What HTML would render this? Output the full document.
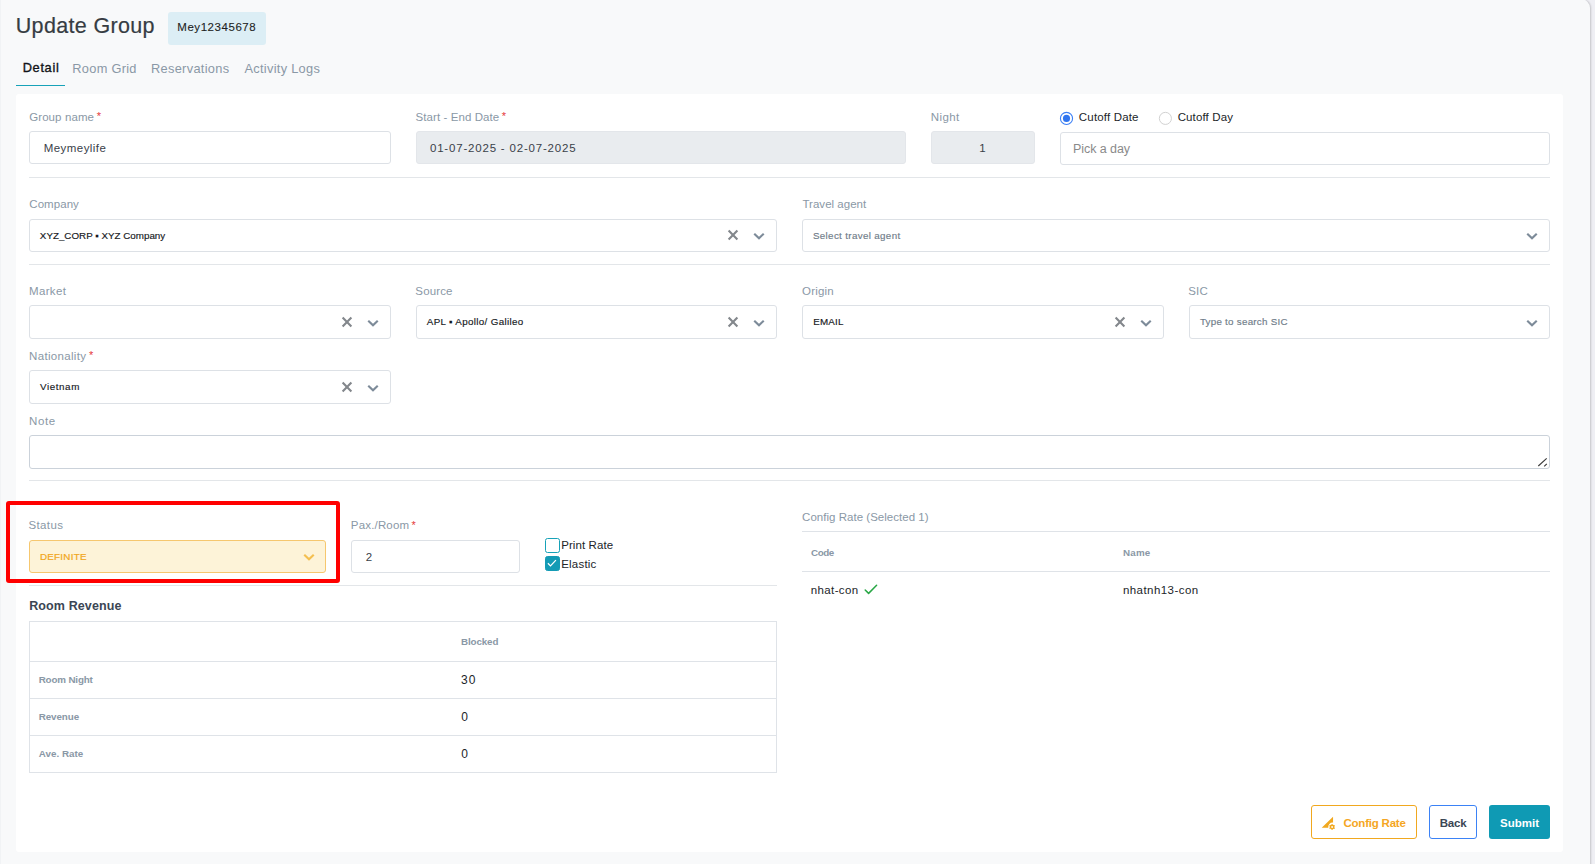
<!DOCTYPE html>
<html lang="en">
<head>
<meta charset="utf-8">
<title>Update Group</title>
<style>
*{box-sizing:border-box;margin:0;padding:0}
html,body{width:1595px;height:864px;overflow:hidden}
body{background:#efeff4;font-family:"Liberation Sans",sans-serif;font-size:12px;color:#343a40;position:relative}
.abs{position:absolute}
svg{display:block}
#panel{position:absolute;left:0;top:-1.5px;width:1590px;height:880px;background:#f8f9fa;border-top-right-radius:9px;box-shadow:1px 0 2px rgba(0,0,0,.18)}
.t{position:absolute;white-space:nowrap}
.box{border:1px solid #dde1e6;border-radius:3px;background:#fff}
.box.dis{background:#e9ecef;border-color:#e3e6ea}
.hr{height:1px;background:#e3e6e9}
.tl{height:1px;background:#dfe3e8}
.cb{width:15px;height:15px;border:1px solid #17a2b8;border-radius:2.5px;background:#fff}
.cb.on{background:#149bb5;border-color:#149bb5}
.btn{height:34px;border-radius:3px;background:#fff}
</style>
</head>
<body>
<div id="panel"></div>
<div class="abs" style="left:0;top:0;width:1px;height:864px;background:#f1f3f5"></div>
<div class="abs" style="left:168px;top:12px;width:98px;height:32.5px;background:#dceef5;border-radius:3px"></div>
<div class="abs" style="left:16px;top:84.8px;width:49px;height:1.4px;background:#17a2b8"></div>
<div class="abs" style="left:16px;top:93.6px;width:1547px;height:758.6px;background:#fff;border-radius:3px"></div>
<div class="abs box" style="left:29px;top:131px;width:362px;height:33px"></div>
<div class="abs box dis" style="left:416px;top:131px;width:490px;height:33px"></div>
<div class="abs box dis" style="left:931px;top:131px;width:104px;height:33px"></div>
<svg class="abs" style="left:1058px;top:110px" width="17" height="17" viewBox="0 0 17 17"><circle cx="8.5" cy="8.4" r="6.05" fill="#fff" stroke="#3b7ff5" stroke-width="1.1"/><circle cx="8.5" cy="8.4" r="3.55" fill="#2f74ef"/></svg>
<svg class="abs" style="left:1157px;top:110px" width="17" height="17" viewBox="0 0 17 17"><circle cx="8.4" cy="8.4" r="6.05" fill="#fff" stroke="#d2d2d2" stroke-width="1"/></svg>
<div class="abs box" style="left:1060px;top:132px;width:490px;height:33px"></div>
<div class="abs hr" style="left:29px;top:177px;width:1521px"></div>
<div class="abs hr" style="left:29px;top:264px;width:1521px"></div>
<div class="abs hr" style="left:29px;top:480px;width:1521px"></div>
<div class="abs box" style="left:29px;top:219px;width:748px;height:33px"></div><svg class="abs" style="left:725.70px;top:228.05px" width="14" height="14" viewBox="-7 -7 14 14"><path d="M-4.4 -4.45 L4.4 4.45 M4.4 -4.45 L-4.4 4.45" stroke="#83878c" stroke-width="2.1" fill="none"/></svg><svg class="abs" style="left:751.90px;top:228.75px" width="14" height="14" viewBox="-7 -7 14 14"><path d="M-4.75 -2.36 L0 2.36 L4.75 -2.36" stroke="#7d8b99" stroke-width="2.1" fill="none"/></svg>
<div class="abs box" style="left:802px;top:219px;width:748px;height:33px"></div><svg class="abs" style="left:1524.90px;top:228.75px" width="14" height="14" viewBox="-7 -7 14 14"><path d="M-4.75 -2.36 L0 2.36 L4.75 -2.36" stroke="#7d8b99" stroke-width="2.1" fill="none"/></svg>
<div class="abs box" style="left:29px;top:305px;width:362px;height:34px"></div><svg class="abs" style="left:339.70px;top:315.05px" width="14" height="14" viewBox="-7 -7 14 14"><path d="M-4.4 -4.45 L4.4 4.45 M4.4 -4.45 L-4.4 4.45" stroke="#83878c" stroke-width="2.1" fill="none"/></svg><svg class="abs" style="left:365.90px;top:315.75px" width="14" height="14" viewBox="-7 -7 14 14"><path d="M-4.75 -2.36 L0 2.36 L4.75 -2.36" stroke="#7d8b99" stroke-width="2.1" fill="none"/></svg>
<div class="abs box" style="left:416px;top:305px;width:361px;height:34px"></div><svg class="abs" style="left:725.70px;top:315.05px" width="14" height="14" viewBox="-7 -7 14 14"><path d="M-4.4 -4.45 L4.4 4.45 M4.4 -4.45 L-4.4 4.45" stroke="#83878c" stroke-width="2.1" fill="none"/></svg><svg class="abs" style="left:751.90px;top:315.75px" width="14" height="14" viewBox="-7 -7 14 14"><path d="M-4.75 -2.36 L0 2.36 L4.75 -2.36" stroke="#7d8b99" stroke-width="2.1" fill="none"/></svg>
<div class="abs box" style="left:802px;top:305px;width:362px;height:34px"></div><svg class="abs" style="left:1112.70px;top:315.05px" width="14" height="14" viewBox="-7 -7 14 14"><path d="M-4.4 -4.45 L4.4 4.45 M4.4 -4.45 L-4.4 4.45" stroke="#83878c" stroke-width="2.1" fill="none"/></svg><svg class="abs" style="left:1138.90px;top:315.75px" width="14" height="14" viewBox="-7 -7 14 14"><path d="M-4.75 -2.36 L0 2.36 L4.75 -2.36" stroke="#7d8b99" stroke-width="2.1" fill="none"/></svg>
<div class="abs box" style="left:1189px;top:305px;width:361px;height:34px"></div><svg class="abs" style="left:1524.90px;top:315.75px" width="14" height="14" viewBox="-7 -7 14 14"><path d="M-4.75 -2.36 L0 2.36 L4.75 -2.36" stroke="#7d8b99" stroke-width="2.1" fill="none"/></svg>
<div class="abs box" style="left:29px;top:370px;width:362px;height:34px"></div><svg class="abs" style="left:339.70px;top:380.05px" width="14" height="14" viewBox="-7 -7 14 14"><path d="M-4.4 -4.45 L4.4 4.45 M4.4 -4.45 L-4.4 4.45" stroke="#83878c" stroke-width="2.1" fill="none"/></svg><svg class="abs" style="left:365.90px;top:380.75px" width="14" height="14" viewBox="-7 -7 14 14"><path d="M-4.75 -2.36 L0 2.36 L4.75 -2.36" stroke="#7d8b99" stroke-width="2.1" fill="none"/></svg>
<div class="abs box" style="left:29px;top:435px;width:1521px;height:34px;border-color:#cbd2da"></div>
<svg class="abs" style="left:1536px;top:456px" width="12" height="12" viewBox="0 0 12 12"><path d="M2.3 10 L10.7 2.4 M8.2 10.4 L10.8 7.8" stroke="#3c3c3c" stroke-width="1.2" fill="none"/></svg>
<div class="abs" style="left:6.3px;top:501.3px;width:333.4px;height:81.3px;border:4.2px solid #ff0000;border-radius:3px"></div>
<div class="abs box" style="left:29px;top:540px;width:297px;height:33px;background:#fdf3d8;border-color:#f6c76f"></div>
<svg class="abs" style="left:301.50px;top:549.60px" width="14" height="14" viewBox="-7 -7 14 14"><path d="M-4.75 -2.36 L0 2.36 L4.75 -2.36" stroke="#f4bf50" stroke-width="2.1" fill="none"/></svg>
<div class="abs box" style="left:351px;top:540px;width:169px;height:33px"></div>
<div class="abs cb" style="left:545px;top:538px"></div>
<div class="abs cb on" style="left:545px;top:556px"></div><svg class="abs" style="left:545px;top:556px" width="15" height="15" viewBox="0 0 15 15"><path d="M2.9 7.2 L5.5 9.9 L10.9 4.1" stroke="#fff" stroke-width="1.25" fill="none"/></svg>
<div class="abs hr" style="left:29px;top:585px;width:748px"></div>
<div class="abs" style="left:29px;top:621px;width:748px;height:152px;border:1px solid #dfe3e8"></div>
<div class="abs tl" style="left:29px;top:661px;width:748px"></div>
<div class="abs tl" style="left:29px;top:698px;width:748px"></div>
<div class="abs tl" style="left:29px;top:735px;width:748px"></div>
<div class="abs tl" style="left:802px;top:531px;width:748px"></div>
<div class="abs tl" style="left:802px;top:571px;width:748px"></div>
<svg class="abs" style="left:864px;top:584px" width="14" height="11" viewBox="0 0 14 11"><path d="M1.2 6 L4.6 9.4 L12.6 1.3" stroke="#28a745" stroke-width="1.5" fill="none" stroke-linecap="round" stroke-linejoin="round"/></svg>
<div class="abs btn" style="left:1311px;top:805px;width:106px;border:1.2px solid #f1a81f"></div>
<svg class="abs" style="left:1321px;top:816px" width="16" height="16" viewBox="0 0 16 16"><path d="M12.05 0.8 L12.05 6.6 A4.4 4.4 0 0 0 7.3 11.75 L0.7 11.75 Z" fill="#f1a81f"/><g transform="translate(11.1 11.0)" stroke="#f1a81f" fill="none"><circle r="1.65" stroke-width="1.5"/><g stroke-width="1.15"><line x1="0" y1="-2.2" x2="0" y2="-3.0" transform="rotate(0)" /><line x1="0" y1="-2.2" x2="0" y2="-3.0" transform="rotate(60)" /><line x1="0" y1="-2.2" x2="0" y2="-3.0" transform="rotate(120)" /><line x1="0" y1="-2.2" x2="0" y2="-3.0" transform="rotate(180)" /><line x1="0" y1="-2.2" x2="0" y2="-3.0" transform="rotate(240)" /><line x1="0" y1="-2.2" x2="0" y2="-3.0" transform="rotate(300)" /></g></g></svg>
<div class="abs btn" style="left:1429px;top:805px;width:48px;border:1.2px solid #3b82f6"></div>
<div class="abs btn" style="left:1489px;top:805px;width:61px;background:#0f9ab4"></div>
<span class="t" style="left:15.74px;top:16px;line-height:21.5px;font-size:21.5px;font-weight:normal;letter-spacing:0.336px;color:#363c42;-webkit-text-stroke:0.2px #363c42">Update Group</span>
<span class="t" style="left:177.29px;top:22px;line-height:11.5px;font-size:11.5px;font-weight:normal;letter-spacing:0.553px;color:#1c1f23;-webkit-text-stroke:0.1px #1c1f23">Mey12345678</span>
<span class="t" style="left:22.71px;top:62px;line-height:12.8px;font-size:12.8px;font-weight:normal;letter-spacing:0.666px;color:#111418;-webkit-text-stroke:0.35px #111418">Detail</span>
<span class="t" style="left:72.29px;top:63px;line-height:12.8px;font-size:12.8px;font-weight:normal;letter-spacing:0.292px;color:#8a98a6">Room Grid</span>
<span class="t" style="left:150.99px;top:63px;line-height:12.8px;font-size:12.8px;font-weight:normal;letter-spacing:0.315px;color:#8a98a6">Reservations</span>
<span class="t" style="left:244.47px;top:63px;line-height:12.8px;font-size:12.8px;font-weight:normal;letter-spacing:0.290px;color:#8a98a6">Activity Logs</span>
<span class="t" style="left:29.17px;top:112px;line-height:11.5px;font-size:11.5px;font-weight:normal;letter-spacing:0.099px;color:#8a98a6">Group name</span>
<span class="t" style="left:43.75px;top:143px;line-height:11.5px;font-size:11.5px;font-weight:normal;letter-spacing:0.443px;color:#3a4149">Meymeylife</span>
<span class="t" style="left:415.56px;top:112px;line-height:11.5px;font-size:11.5px;font-weight:normal;letter-spacing:0.081px;color:#8a98a6">Start - End Date</span>
<span class="t" style="left:429.96px;top:143px;line-height:11.5px;font-size:11.5px;font-weight:normal;letter-spacing:0.809px;color:#3a4149">01-07-2025 - 02-07-2025</span>
<span class="t" style="left:930.75px;top:112px;line-height:11.5px;font-size:11.5px;font-weight:normal;letter-spacing:0.418px;color:#8a98a6">Night</span>
<span class="t" style="left:979.29px;top:143px;line-height:11.5px;font-size:11.5px;font-weight:normal;letter-spacing:0.000px;color:#3a4149">1</span>
<span class="t" style="left:1078.87px;top:112px;line-height:11.5px;font-size:11.5px;font-weight:normal;letter-spacing:0.169px;color:#212529">Cutoff Date</span>
<span class="t" style="left:1177.67px;top:112px;line-height:11.5px;font-size:11.5px;font-weight:normal;letter-spacing:0.125px;color:#212529">Cutoff Day</span>
<span class="t" style="left:1073.09px;top:143px;line-height:12.5px;font-size:12.5px;font-weight:normal;letter-spacing:-0.077px;color:#8a8a8a">Pick a day</span>
<span class="t" style="left:29.27px;top:199px;line-height:11.5px;font-size:11.5px;font-weight:normal;letter-spacing:0.064px;color:#8a98a6">Company</span>
<span class="t" style="left:39.85px;top:231px;line-height:9.8px;font-size:9.8px;font-weight:normal;letter-spacing:0.006px;color:#15181c;-webkit-text-stroke:0.15px #15181c">XYZ_CORP &#x25AA; XYZ Company</span>
<span class="t" style="left:802.51px;top:199px;line-height:11.5px;font-size:11.5px;font-weight:normal;letter-spacing:0.014px;color:#8a98a6">Travel agent</span>
<span class="t" style="left:812.93px;top:231px;line-height:9.8px;font-size:9.8px;font-weight:normal;letter-spacing:0.337px;color:#6f7c89;-webkit-text-stroke:0.15px #6f7c89">Select travel agent</span>
<span class="t" style="left:29.05px;top:286px;line-height:11.5px;font-size:11.5px;font-weight:normal;letter-spacing:0.334px;color:#8a98a6">Market</span>
<span class="t" style="left:415.36px;top:286px;line-height:11.5px;font-size:11.5px;font-weight:normal;letter-spacing:0.144px;color:#8a98a6">Source</span>
<span class="t" style="left:426.77px;top:317px;line-height:9.8px;font-size:9.8px;font-weight:normal;letter-spacing:0.340px;color:#15181c;-webkit-text-stroke:0.15px #15181c">APL &#x25AA; Apollo/ Galileo</span>
<span class="t" style="left:802.09px;top:286px;line-height:11.5px;font-size:11.5px;font-weight:normal;letter-spacing:0.197px;color:#8a98a6">Origin</span>
<span class="t" style="left:813.29px;top:317px;line-height:9.8px;font-size:9.8px;font-weight:normal;letter-spacing:0.190px;color:#15181c;-webkit-text-stroke:0.15px #15181c">EMAIL</span>
<span class="t" style="left:1188.16px;top:286px;line-height:11.5px;font-size:11.5px;font-weight:normal;letter-spacing:0.263px;color:#8a98a6">SIC</span>
<span class="t" style="left:1199.88px;top:317px;line-height:9.8px;font-size:9.8px;font-weight:normal;letter-spacing:0.257px;color:#6f7c89;-webkit-text-stroke:0.15px #6f7c89">Type to search SIC</span>
<span class="t" style="left:29.05px;top:351px;line-height:11.5px;font-size:11.5px;font-weight:normal;letter-spacing:0.315px;color:#8a98a6">Nationality</span>
<span class="t" style="left:40.06px;top:382px;line-height:9.8px;font-size:9.8px;font-weight:normal;letter-spacing:0.584px;color:#15181c;-webkit-text-stroke:0.15px #15181c">Vietnam</span>
<span class="t" style="left:29.05px;top:416px;line-height:11.5px;font-size:11.5px;font-weight:normal;letter-spacing:0.576px;color:#8a98a6">Note</span>
<span class="t" style="left:28.56px;top:520px;line-height:11.5px;font-size:11.5px;font-weight:normal;letter-spacing:0.353px;color:#8a98a6">Status</span>
<span class="t" style="left:39.93px;top:552px;line-height:9.8px;font-size:9.8px;font-weight:normal;letter-spacing:0.282px;color:#f1a620;-webkit-text-stroke:0.22px #f1a620">DEFINITE</span>
<span class="t" style="left:350.85px;top:520px;line-height:11.5px;font-size:11.5px;font-weight:normal;letter-spacing:0.167px;color:#8a98a6">Pax./Room</span>
<span class="t" style="left:365.77px;top:552px;line-height:11.5px;font-size:11.5px;font-weight:normal;letter-spacing:0.000px;color:#3a4149">2</span>
<span class="t" style="left:561.15px;top:540px;line-height:11.5px;font-size:11.5px;font-weight:normal;letter-spacing:0.099px;color:#212529">Print Rate</span>
<span class="t" style="left:561.15px;top:559px;line-height:11.5px;font-size:11.5px;font-weight:normal;letter-spacing:0.225px;color:#212529">Elastic</span>
<span class="t" style="left:29.20px;top:600px;line-height:12.5px;font-size:12.5px;font-weight:bold;letter-spacing:0.115px;color:#3b4654">Room Revenue</span>
<span class="t" style="left:461.04px;top:637px;line-height:9.8px;font-size:9.8px;font-weight:bold;letter-spacing:-0.128px;color:#8a98a6">Blocked</span>
<span class="t" style="left:38.64px;top:675px;line-height:9.8px;font-size:9.8px;font-weight:bold;letter-spacing:-0.140px;color:#8a98a6">Room Night</span>
<span class="t" style="left:38.64px;top:712px;line-height:9.8px;font-size:9.8px;font-weight:bold;letter-spacing:-0.058px;color:#8a98a6">Revenue</span>
<span class="t" style="left:38.80px;top:749px;line-height:9.8px;font-size:9.8px;font-weight:bold;letter-spacing:0.011px;color:#8a98a6">Ave. Rate</span>
<span class="t" style="left:461.01px;top:674px;line-height:12px;font-size:12px;font-weight:normal;letter-spacing:1.145px;color:#212529">30</span>
<span class="t" style="left:461.17px;top:711px;line-height:12px;font-size:12px;font-weight:normal;letter-spacing:0.000px;color:#212529">0</span>
<span class="t" style="left:461.17px;top:748px;line-height:12px;font-size:12px;font-weight:normal;letter-spacing:0.000px;color:#212529">0</span>
<span class="t" style="left:802.07px;top:512px;line-height:11.5px;font-size:11.5px;font-weight:normal;letter-spacing:0.027px;color:#8a98a6">Config Rate (Selected 1)</span>
<span class="t" style="left:811.10px;top:548px;line-height:9.8px;font-size:9.8px;font-weight:bold;letter-spacing:-0.437px;color:#8a98a6">Code</span>
<span class="t" style="left:1123.04px;top:548px;line-height:9.8px;font-size:9.8px;font-weight:bold;letter-spacing:0.190px;color:#8a98a6">Name</span>
<span class="t" style="left:810.83px;top:585px;line-height:11.5px;font-size:11.5px;font-weight:normal;letter-spacing:0.364px;color:#212529">nhat-con</span>
<span class="t" style="left:1122.93px;top:585px;line-height:11.5px;font-size:11.5px;font-weight:normal;letter-spacing:0.445px;color:#212529">nhatnh13-con</span>
<span class="t" style="left:1343.47px;top:818px;line-height:11.5px;font-size:11.5px;font-weight:bold;letter-spacing:-0.216px;color:#f5a623">Config Rate</span>
<span class="t" style="left:1439.74px;top:818px;line-height:11.5px;font-size:11.5px;font-weight:bold;letter-spacing:-0.227px;color:#3b4654">Back</span>
<span class="t" style="left:1499.93px;top:818px;line-height:11.5px;font-size:11.5px;font-weight:bold;letter-spacing:0.042px;color:#ffffff">Submit</span>
<span class="t" style="left:96.65px;top:111px;line-height:11px;font-size:11px;color:#e5383b">*</span>
<span class="t" style="left:501.65px;top:111px;line-height:11px;font-size:11px;color:#e5383b">*</span>
<span class="t" style="left:89.05px;top:350px;line-height:11px;font-size:11px;color:#e5383b">*</span>
<span class="t" style="left:411.55px;top:520px;line-height:11px;font-size:11px;color:#e5383b">*</span>
</body>
</html>
